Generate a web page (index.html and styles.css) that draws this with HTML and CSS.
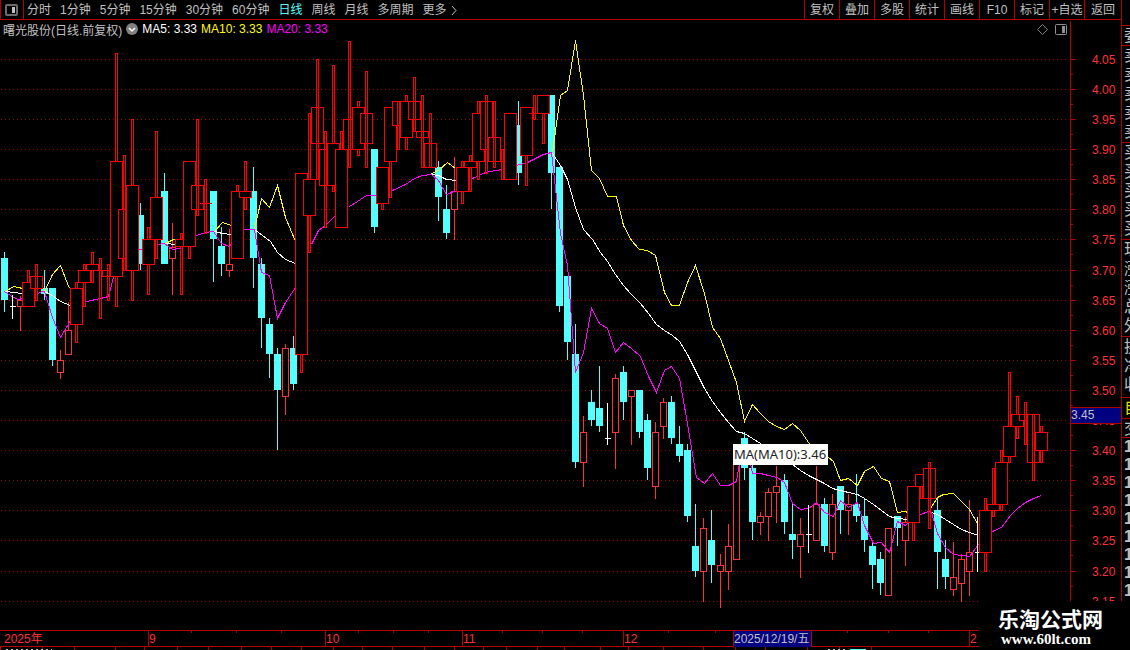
FILE: index.html
```html
<!DOCTYPE html>
<html lang="zh-CN">
<head>
    <meta charset="UTF-8">
    <meta name="viewport" content="width=device-width, initial-scale=1.0">
    <title>曙光股份</title>
    <link rel="stylesheet" href="styles.css">
</head>
<body>
    <div class="terminal">
        <div class="main">
            <!-- Toolbar -->
            <header class="toolbar">
                <button class="panel-toggle" aria-label="侧栏">
                    <svg width="13" height="12" viewBox="0 0 13 12">
                        <rect x="1" y="1" width="11" height="10" rx="1" fill="none" stroke="#6c6c6c" stroke-width="2"/>
                        <rect x="7" y="3" width="3" height="6" fill="#c0c0c0"/>
                    </svg>
                </button>
                <nav class="periods">
                    <button>分时</button>
                    <button>1分钟</button>
                    <button>5分钟</button>
                    <button>15分钟</button>
                    <button>30分钟</button>
                    <button>60分钟</button>
                    <button class="active">日线</button>
                    <button>周线</button>
                    <button>月线</button>
                    <button>多周期</button>
                    <button class="more">更多
                        <svg width="6" height="9" viewBox="0 0 6 9"><path d="M1 0L5 4.500L1 9" fill="none" stroke="#c0c0c0"/></svg>
                    </button>
                </nav>
                <div class="tools">
                    <button>复权</button>
                    <button>叠加</button>
                    <button>多股</button>
                    <button>统计</button>
                    <button>画线</button>
                    <button>F10</button>
                    <button>标记</button>
                    <button>+自选</button>
                    <button>返回</button>
                </div>
            </header>

            <!-- Chart -->
            <div class="workspace">
                <section class="chart">
                    <div class="legend">
                        <span class="stock">曙光股份(日线.前复权)</span>
                        <button class="dropdown" aria-label="指标">
                            <svg width="12" height="12" viewBox="0 0 12 12">
                                <circle cx="6" cy="6" r="6" fill="#808080"/>
                                <path d="M3 5L6 8L9 5" fill="none" stroke="#fff" stroke-width="1.500"/>
                            </svg>
                        </button>
                        <span class="ma5">MA5: 3.33</span>
                        <span class="ma10">MA10: 3.33</span>
                        <span class="ma20">MA20: 3.33</span>
                        <span class="chart-icons">
                            <svg width="11" height="11" viewBox="0 0 11 11"><path d="M5.500 .5L10.500 5.500L5.500 10.500L.5 5.500z" fill="none" stroke="#808080"/></svg>
                            <svg width="12" height="11" viewBox="0 0 12 11">
                                <rect x=".5" y=".5" width="11" height="10" rx="1" fill="none" stroke="#909090"/>
                                <rect x="7" y="2" width="3" height="7" fill="#909090"/>
                            </svg>
                        </span>
                    </div>
                    <svg id="plot" class="plot" viewBox="0 38 1070 592" preserveAspectRatio="none"></svg>
                    <div class="tooltip">MA(MA10):3.46</div>
                </section>
                <svg id="axis" class="axis" viewBox="0 20 51 610"></svg>
            </div>

            <!-- Time axis -->
            <div class="dates">
                <span class="first">2025年</span>
                <span>9</span>
                <span>10</span>
                <span>11</span>
                <span>12</span>
                <span class="cursor-date">2025/12/19/五</span>
                <span></span>
                <span>2</span>
                <svg id="dateTicks" class="date-ticks" viewBox="0 0 1121 3" preserveAspectRatio="none"></svg>
            </div>
            <svg id="lower" class="lower" viewBox="0 647 1121 3" preserveAspectRatio="none"></svg>
        </div>

        <!-- Quote panel, runs off the right edge -->
        <aside class="quote">
            <div class="q1">委比</div>
            <div class="q5"><p>卖五</p><p>卖四</p><p>卖三</p><p>卖二</p><p>卖一</p></div>
            <div class="q5"><p>买一</p><p>买二</p><p>买三</p><p>买四</p><p>买五</p></div>
            <div class="q5"><p>现价</p><p>涨跌</p><p>涨幅</p><p>总量</p><p>外盘</p></div>
            <div class="q3"><p>换手</p><p>净资</p><p>收益</p></div>
            <div class="own">自选</div>
            <div class="deal">交易</div>
            <div class="ticks"><p>14</p><p>14</p><p>14</p><p>14</p><p>14</p><p>14</p><p>14</p><p>14</p><p>14</p></div>
        </aside>

        <footer class="brand">
            <strong>乐淘公式网</strong>
            <a href="#">www.60lt.com</a>
        </footer>
    </div>

    <script src="chart.js"></script>
</body>
</html>
```
FILE: styles.css
```css
body {
    margin: 0;
    background-color: #000;
    color: #c0c0c0;
    font-family: "Liberation Sans", "Noto Sans CJK SC", sans-serif;
    font-size: 12px;
    overflow: hidden;
}

button {
    padding: 0;
    border: none;
    background: none;
    color: inherit;
    font: inherit;
    line-height: 18px;
    white-space: nowrap;
    cursor: pointer;
}

p {
    margin: 0;
}

svg {
    display: block;
}

.terminal {
    display: flex;
    position: relative;
    height: 100vh;
    overflow: hidden;
}

.main {
    flex: 1;
    min-width: 0;
}

/* Toolbar */
.toolbar {
    display: flex;
    height: 19px;
    border-bottom: 1px solid #b00000;
}

.panel-toggle {
    width: 24px;
    padding-left: 4px;
    border-left: 1px solid #b00000;
    border-right: 1px solid #b00000;
}

.periods {
    display: flex;
    gap: 9px;
    padding-left: 3px;
}

.periods button,
.tools button {
    padding-top: 1px;
}

.periods .active {
    color: #54ffff;
}

.more {
    display: flex;
    align-items: center;
    gap: 4px;
}

.tools {
    display: flex;
    margin-left: auto;
}

.tools button {
    width: 35px;
    border-left: 1px solid #b00000;
}

.tools button:last-child {
    width: 37px;
}

/* Chart */
.workspace {
    display: flex;
    height: 610px;
}

.chart {
    flex: 1;
    min-width: 0;
    position: relative;
}

.legend {
    display: flex;
    align-items: center;
    gap: 4px;
    height: 18px;
    padding: 0 3px;
    white-space: nowrap;
}

.ma5 {
    color: #fff;
}

.ma10 {
    color: #ff0;
}

.ma20 {
    color: #f0f;
}

.chart-icons {
    display: flex;
    gap: 7px;
    margin-left: auto;
}

.plot {
    width: 100%;
    height: 592px;
    shape-rendering: crispEdges;
}

.tooltip {
    position: absolute;
    left: 68.5%;
    top: 424px;
    padding: 0 2px 0 1px;
    background-color: #fff;
    color: #222;
    font-family: "Noto Sans", sans-serif;
    font-size: 13px;
    line-height: 21px;
}

.grid {
    fill: none;
    stroke: #a00000;
    stroke-dasharray: 1 3;
}

.down {
    fill: #54ffff;
}

.up {
    fill: #000;
    stroke: #ff3232;
}

.flat {
    fill: none;
    stroke: #fff;
}

.strong {
    fill: #000;
    stroke: #f00;
}

.through {
    fill: none;
    stroke: #f00;
}

.line {
    fill: none;
}

.axis {
    width: 51px;
    height: 610px;
    font-size: 12px;
}

.axis path {
    fill: none;
    stroke: #b00000;
    shape-rendering: crispEdges;
}

.axis text {
    fill: #ff3232;
}

.axis rect {
    fill: #000080;
    stroke: #b00000;
    shape-rendering: crispEdges;
}

.axis .now {
    fill: #c0c0c0;
}

/* Time axis */
.dates {
    display: grid;
    grid-template-columns: 148fr 177fr 137fr 161fr 110fr 78fr 158fr 152fr;
    position: relative;
    height: 15px;
    border-top: 1px solid #b00000;
    border-bottom: 1px solid #b00000;
    color: #ff3232;
    line-height: 16px;
    white-space: nowrap;
}

.dates span {
    min-width: 0;
    border-left: 1px solid #b00000;
}

.dates .first {
    padding-left: 4px;
    border: none;
}

.dates .cursor-date {
    background-color: #000080;
    color: #c0c0c0;
}

.date-ticks {
    position: absolute;
    left: 0;
    top: 0;
    width: 100%;
    height: 3px;
}

.lower {
    width: 100%;
    height: 3px;
}

.date-ticks path,
.lower path {
    fill: none;
    stroke: #b00000;
    shape-rendering: crispEdges;
}

.lower .caption {
    stroke: #c0c0c0;
    stroke-dasharray: 2 3;
}

.lower .value {
    stroke: #54ffff;
}

/* Quote panel */
.quote {
    width: 8px;
    overflow: hidden;
    border-left: 1px solid #b00000;
    padding-top: 25px;
    font-size: 16px;
    white-space: nowrap;
}

.quote div {
    box-sizing: border-box;
    width: 40px;
    padding-left: 2px;
    border-top: 1px solid #b00000;
    line-height: 19px;
}

.quote .q1 {
    height: 20px;
}

.quote .q5 {
    height: 97px;
}

.quote .q3 {
    height: 61px;
}

.quote .own {
    height: 21px;
    color: #e0e000;
}

.quote .deal {
    height: 19px;
}

.quote .ticks {
    font-weight: bold;
    line-height: 18px;
}

/* Site name over the bottom corner */
.brand {
    position: absolute;
    right: 0;
    bottom: 0;
    box-sizing: border-box;
    width: 151px;
    height: 49px;
    padding: 4px 0 0 19px;
    background-color: #000;
    color: #fff;
}

.brand strong {
    display: block;
    font-family: "Noto Sans CJK SC", sans-serif;
    font-size: 21px;
    line-height: 26px;
}

.brand a {
    display: block;
    padding-left: 3px;
    color: #fff;
    font-family: "Liberation Serif", serif;
    font-size: 15px;
    font-weight: bold;
    line-height: 16px;
    text-decoration: none;
}
```
FILE: chart.js
```js
// Each bar: x, high, body top, body bottom, low
const down = [
    [4,252,258,300,312], [44,270,288,294,300], [52,288,288,360,366], [140,203,215,264,270],
    [164,173,191,264,264], [213,191,191,239,282], [221,227,246,264,276], [253,167,191,258,288],
    [261,258,264,318,348], [269,318,324,354,378], [277,348,354,390,450], [293,336,348,384,390],
    [374,149,149,227,233], [438,161,167,197,221], [446,185,209,233,239], [518,101,125,173,185],
    [551,95,95,173,209], [559,167,167,306,312], [567,276,276,342,360], [575,324,354,462,468],
    [591,390,402,420,426], [599,366,408,426,432], [623,366,372,402,420], [639,390,390,432,438],
    [647,414,420,468,480], [671,396,402,438,444], [679,426,444,456,462], [687,444,450,516,522],
    [695,504,546,571,577], [711,510,540,565,583], [744,432,438,468,480], [752,465,468,522,540],
    [784,474,480,522,534], [792,504,534,540,559], [824,498,504,546,552], [840,486,486,510,534],
    [856,474,504,516,522], [864,498,516,540,552], [872,540,546,565,589], [880,552,559,583,595],
    [897,516,516,528,546], [937,498,510,552,589], [945,540,559,577,589]
];

const up = [
    [20,295,300,306,330], [60,349,360,372,378], [68,301,330,354,354], [172,222,247,258,294],
    [229,228,264,270,276], [285,343,348,396,414], [454,156,191,209,239], [583,415,432,462,486],
    [615,373,378,432,468], [631,390,390,396,444], [655,421,432,486,498], [663,397,402,426,438],
    [703,517,528,571,601], [720,553,565,571,607], [728,523,546,571,589], [736,450,450,559,559],
    [760,511,516,522,534], [768,487,492,516,540], [776,465,486,492,522], [800,517,534,546,577],
    [816,465,504,540,540], [832,493,504,552,559], [848,493,504,510,534], [888,528,528,595,595],
    [905,516,522,540,565], [953,541,577,589,595], [961,553,559,583,601], [969,499,552,571,595]
];

// x, high, price, low
const flat = [[12,294,306,318], [607,402,438,444], [808,504,534,552], [977,516,552,571]];

// Rising bars drawn wide, a trailing 1 keeps the shadow visible over the body
const strong = [
    [28,270,282,306,306], [36,264,276,288,300,1], [76,282,288,324,342], [84,264,270,282,306],
    [92,252,264,270,282], [100,258,270,270,318,1], [108,264,270,276,300,1], [116,53,161,276,306],
    [124,155,209,258,270,1], [132,119,185,270,300], [148,227,239,264,294], [156,131,197,239,258],
    [181,233,239,246,294], [189,161,161,246,258], [197,119,185,209,215,1], [205,179,203,203,233,1],
    [237,185,191,258,258], [245,161,191,197,209], [301,173,173,354,372], [309,113,179,215,252],
    [317,59,107,143,179,1], [325,131,149,185,227,1], [333,65,143,185,191], [341,131,149,227,227],
    [349,41,119,149,167,1], [358,101,107,149,155], [366,71,113,143,167,1], [382,167,167,203,209],
    [390,107,107,161,197], [398,101,101,125,149,1], [406,95,101,137,149], [414,77,101,119,131,1],
    [422,95,131,137,167,1], [430,113,143,167,167,1], [462,161,167,191,203], [470,155,161,167,191],
    [478,101,113,161,179], [486,95,101,149,173,1], [494,101,137,161,167,1], [502,149,161,161,179,1],
    [510,113,113,179,179], [526,107,107,155,185], [534,95,113,113,119,1], [543,95,95,113,143],
    [913,486,486,522,540], [921,474,474,486,498], [929,462,468,498,528,1], [985,498,510,552,571],
    [993,468,504,510,516], [1001,450,462,504,510], [1009,372,426,456,462], [1017,396,414,426,438],
    [1025,402,414,420,444,1], [1033,414,414,462,480,1], [1041,426,432,450,462]
];

const yellow = [
    "5,291 13,286 18,287 22,288", "44,291 52,274 60,265 69,288", "165,243 173,239 176,239",
    "214,231 222,222 231,225", "254,229 261,198 269,207 277,185 285,217 295,241",
    "431,173 438,170 447,162 455,168",
    "552,152 560,95 567,90 575,40 583,95 591,170 599,178 607,196 616,196 623,225 631,240 639,249 647,250 655,255 664,292 671,305 679,305 687,282 695,265 704,293 712,327 720,338 728,360 736,382 744,421 752,404 760,413 768,421 776,426 784,429 792,423 800,430 808,442 816,451 828,457 833,461 840,480 848,478 857,485 864,471 873,466 881,478 889,481 897,512 905,511 907,512",
    "930,508 937,497 943,494 953,493 961,501 969,509 978,525"
];

const white = [
    "5,291 13,292 22,293", "44,291 52,295 60,301 70,305", "165,243 176,244", "214,231 222,233 231,234",
    "254,229 262,235 270,241 277,252 285,259 295,263", "431,174 438,175 446,179 456,180",
    "552,153 560,165 567,179 575,207 583,229 592,239 600,252 607,261 615,274 623,285 631,294 640,303 648,313 656,324 664,330 672,335 679,341 687,354 696,372 704,388 712,401 720,412 728,422 736,431 744,433 752,438 760,443 776,454 792,464 800,470 808,475 816,479 824,483 832,488 840,490 848,492 857,494 864,498 873,504 881,510 889,516 897,518 907,519",
    "931,512 937,514 945,519 953,524 961,529 969,532 978,535"
];

const magenta = [
    "4,291 13,297 18,299 22,298", "38,293 41,291 44,291 52,317 60,337 70,320", "86,301 100,298 108,296 113,277",
    "137,249 143,249", "158,244 164,243 172,249 180,248", "196,235 205,232 213,231 221,243 229,246 231,243",
    "243,229 254,229 261,272 269,275 277,318 285,302 295,287",
    "311,244 318,230 325,225 334,216", "349,206 357,201 366,195 376,195",
    "392,190 405,184 414,178 422,175 431,174 438,180 446,194 457,190",
    "472,178 485,172 501,169",
    "516,165 527,162 543,154 551,152 560,233 567,265 575,372 583,352 591,308 599,323 607,328 615,352 623,342 631,348 640,356 648,376 656,392 664,370 671,366 679,378 687,423 696,477 704,483 712,473 720,485 728,485 736,481 739,463 750,463 752,473 760,473 768,475 777,477 784,482 792,503 800,509 808,508 816,502 824,512 833,516 840,500 848,507 857,502 864,525 873,543 881,542 889,552 897,521 905,525 907,523",
    "920,514 928,511 931,512 937,533 945,547 953,554 961,555 969,556 978,544",
    "992,531 1001,527 1010,515 1017,508 1025,502 1033,498 1041,495"
];

const levels = [59,89,119,149,179,209,239,270,300,330,360,390,420,450,480,510,540,571,601];

function box(x, y, w, h) {
    return `M${x} ${y}h${w}v${h}h${-w}z`;
}

function lines(list, color) {
    return list.map(p => `<polyline class="line" points="${p}" stroke="${color}"/>`).join('');
}

function drawPlot() {
    let out = `<path class="grid" transform="translate(0 .5)" d="${levels.map(y => `M1 ${y}H1067`).join('')}"/>`;
    out += `<path class="down" d="${down.map(b => box(b[0] - 3, b[2], 7, b[3] - b[2]) + box(b[0], b[1], 1, b[4] - b[1])).join('')}"/>`;
    out += '<g transform="translate(.5 .5)">';
    out += `<path class="up" d="${up.map(b => `M${b[0]} ${b[1]}V${b[2]}M${b[0]} ${b[3]}V${b[4]}` + box(b[0] - 3, b[2], 6, b[3] - b[2])).join('')}"/>`;
    out += lines(yellow, '#ff0') + lines(white, '#fff') + lines(magenta, '#f0f');
    out += `<path class="flat" d="${flat.map(b => `M${b[0]} ${b[1]}V${b[3]}M${b[0] - 3} ${b[2]}h6`).join('')}"/>`;
    strong.forEach(b => {
        const shadow = box(b[0] - 1, b[1], 2, b[4] - b[1]);
        const body = `<path class="strong" d="${box(b[0] - 6, b[2], 12, b[3] - b[2])}"/>`;
        if (b[5]) {
            out += body + `<path class="through" d="${shadow}"/>`;
        } else {
            out += `<path class="strong" d="${shadow}"/>` + body;
        }
    });
    document.getElementById('plot').innerHTML = out + '</g>';
}

function drawAxis() {
    let marks = 'M0 20V630';
    let labels = '';
    levels.forEach((y, i) => {
        marks += `M0 ${y}h5M0 ${y + 15}h2`;
        labels += `<text x="22" y="${y + 5}">${(4.05 - i * 0.05).toFixed(2)}</text>`;
    });
    document.getElementById('axis').innerHTML =
        `<path transform="translate(.5 .5)" d="${marks}"/>${labels}` +
        '<rect x="0" y="407" width="52" height="16" transform="translate(.5 .5)"/><text class="now" x="1" y="419">3.45</text>';
}

function ticks(id, list, y, h) {
    document.getElementById(id).innerHTML =
        `<path transform="translate(.5 0)" d="${list.map(x => `M${x} ${y}v${h}`).join('')}"/>`;
}

drawPlot();
drawAxis();
ticks('dateTicks', [191,236,281,358,393,428,502,542,582,668,715,847,888,928], 0, 2);
ticks('lower', [0,42,74,115,144,177,208,241,271,301,333,362,392,424,454,483,506,537,564,600,628,663,703,735,765,807,839,871], 647, 3);
document.getElementById('lower').innerHTML +=
    '<path class="caption" d="M6 649H52M828 649H846"/><path class="value" d="M850 649H866"/>';
```
